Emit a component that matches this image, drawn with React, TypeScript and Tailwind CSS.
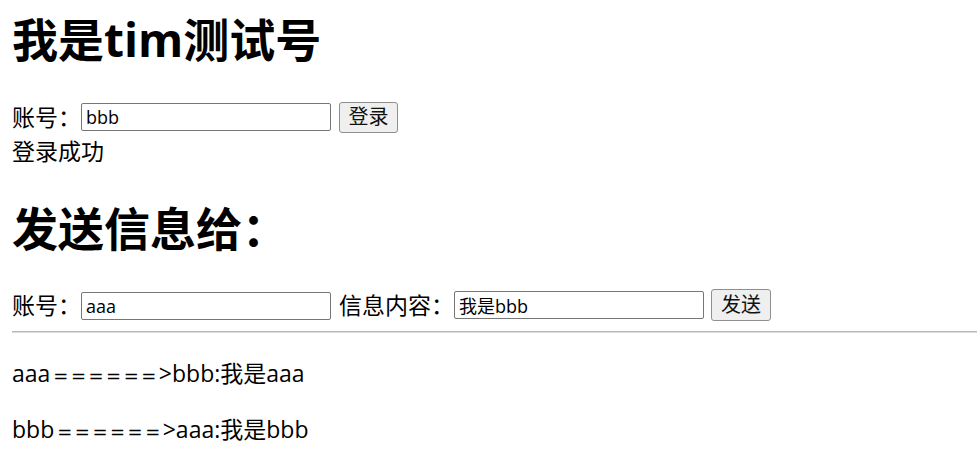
import React from "react";

const font = { fontFamily: '"Open Sans", "Noto Sans CJK SC", sans-serif' };
const eq = { fontFamily: '"DejaVu Sans", sans-serif' };

const App: React.FC = () => {
  return (
    <div style={font} className="w-[977px] h-[471px] bg-white text-black overflow-hidden pl-[12px]">
      <h1 className="mt-[10px] text-[46px] font-bold leading-[58px]">我是tim测试号</h1>

      <div className="mt-[33px] h-[32px] flex items-center text-[23px]">
        <span className="w-[69px]">账号：</span>
        <input
          defaultValue="bbb"
          className="w-[250px] h-[28px] border border-[#767676] rounded-[2px] px-[4px] text-[18px] text-black outline-none"
        />
        <button className="ml-[8px] w-[59px] h-[31px] bg-[#efefef] border border-[#8f8f8f] rounded-[3px] text-[20px] text-[#111] leading-none">
          登录
        </button>
      </div>
      <div className="text-[23px] leading-[36px]">登录成功</div>

      <h1 className="mt-[30px] text-[46px] font-bold leading-[58px]">发送信息给：</h1>

      <div className="mt-[32px] h-[32px] flex items-center text-[23px]">
        <span className="w-[69px]">账号：</span>
        <input
          defaultValue="aaa"
          className="w-[250px] h-[28px] mt-[2px] border border-[#767676] rounded-[2px] px-[4px] text-[18px] text-black outline-none"
        />
        <span className="ml-[8px] w-[115px]">信息内容：</span>
        <input
          defaultValue="我是bbb"
          className="w-[250px] h-[28px] border border-[#767676] rounded-[2px] px-[4px] text-[18px] text-black outline-none"
        />
        <button className="ml-[7px] w-[60px] h-[32px] bg-[#efefef] border border-[#8f8f8f] rounded-[3px] text-[20px] text-[#111] leading-none">
          发送
        </button>
      </div>

      <div className="mt-[10px] h-[2px] border-t border-[#b8b8b8] bg-[#dcdcdc]" />

      <div className="mt-[24px] text-[23px] leading-[32px]">
        aaa<span style={eq} className="text-[18px] tracking-[2.5px] pl-[3px]">======</span>&gt;bbb:我是aaa
      </div>
      <div className="mt-[21px] text-[23px] leading-[32px]">
        bbb<span style={eq} className="text-[18px] tracking-[2.5px] pl-[3px]">======</span>&gt;aaa:我是bbb
      </div>
    </div>
  );
};

export default App;
